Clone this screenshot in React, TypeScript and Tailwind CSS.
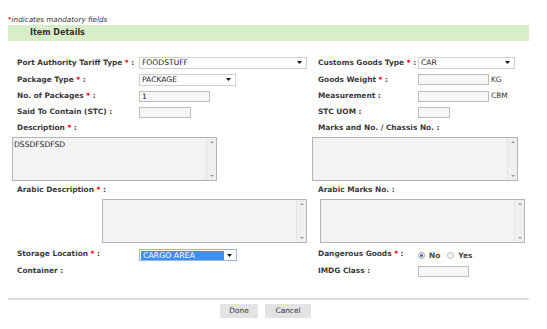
import React from 'react';

const Req = () => <span className="text-[#e60000]"> *</span>;

const Label: React.FC<{ text: string; req?: boolean; className?: string }> = ({ text, req, className }) => (
  <div className={`font-bold text-[7.4px] text-[#3a3a3a] whitespace-nowrap ${className ?? ''}`}>
    {text}
    {req && <Req />}
    {' :'}
  </div>
);

const Arrow = () => (
  <svg width="5" height="3" viewBox="0 0 5 3" className="shrink-0">
    <path d="M0 0 L5 0 L2.5 3 Z" fill="#111" />
  </svg>
);

const Select: React.FC<{ value: string; w: string; active?: boolean }> = ({ value, w, active }) => (
  <div className={`${w} h-[12px] flex items-center justify-between border ${active ? 'border-[#9ab8d8]' : 'border-[#d0d0d0]'} bg-white pl-[1px] pr-[4px]`}>
    {active ? (
      <span className="bg-[#3d8ff0] text-white text-[7.8px] leading-[9px] px-[2px] w-[83px] whitespace-nowrap">{value}</span>
    ) : (
      <span className="text-[7.6px] text-[#222] pl-[1px]">{value}</span>
    )}
    <Arrow />
  </div>
);

const Input: React.FC<{ w: string; value?: string }> = ({ w, value }) => (
  <div className={`${w} h-[11px] border border-[#bdbdbd] bg-[#f7f7f7] text-[7.6px] text-[#222] leading-[9px] pl-[2px]`}>
    {value}
  </div>
);

const Scroll = () => (
  <div className="w-[10px] h-full flex flex-col items-center justify-between py-[3px] bg-[#efefef] border-l border-[#e4e4e4]">
    <svg width="4" height="2" viewBox="0 0 4 2"><path d="M0 2 L4 2 L2 0 Z" fill="#999" /></svg>
    <svg width="4" height="2" viewBox="0 0 4 2"><path d="M0 0 L4 0 L2 2 Z" fill="#999" /></svg>
  </div>
);

const Area: React.FC<{ className: string; value?: string }> = ({ className, value }) => (
  <div className={`${className} h-[44px] flex border border-[#b5b5b5] bg-[#f3f3f3]`}>
    <div className="flex-1 text-[7.6px] text-[#222] pl-[1px] pt-[1px]">{value}</div>
    <Scroll />
  </div>
);

const Row: React.FC<{ h: string; left: React.ReactNode; right: React.ReactNode }> = ({ h, left, right }) => (
  <div className={`flex ${h}`}>
    <div className="w-[302px] flex items-center">{left}</div>
    <div className="flex-1 flex items-center">{right}</div>
  </div>
);

export default function App() {
  return (
    <div className="w-[547px] h-[329px] bg-white font-['DejaVu_Sans',sans-serif] pt-[15px] px-[8px] overflow-hidden">
      <div className="w-[521px]">
        <div className="h-[10px] text-[7.2px] italic text-[#333] leading-[10px]">
          <span className="text-[#e60000]">*</span>indicates mandatory fields
        </div>
        <div className="h-[16px] bg-[#d8eecb] flex items-center pl-[22px] text-[8px] font-bold text-[#333]">Item Details</div>

        <div className="mt-[13px]">
          <Row
            h="h-[17px]"
            left={<><Label text="Port Authority Tariff Type" req className="w-[131px] pl-[9px]" /><Select value="FOODSTUFF" w="w-[168px]" /></>}
            right={<><Label text="Customs Goods Type" req className="w-[108px] pl-[8px]" /><Select value="CAR" w="w-[97px]" /></>}
          />
          <Row
            h="h-[17px]"
            left={<><Label text="Package Type" req className="w-[131px] pl-[9px]" /><Select value="PACKAGE" w="w-[97px]" /></>}
            right={<><Label text="Goods Weight" req className="w-[108px] pl-[8px]" /><Input w="w-[71px]" /><span className="text-[7.4px] text-[#333] ml-[2px]">KG</span></>}
          />
          <Row
            h="h-[16px]"
            left={<><Label text="No. of Packages" req className="w-[131px] pl-[9px]" /><Input w="w-[71px]" value="1" /></>}
            right={<><Label text="Measurement" className="w-[108px] pl-[8px]" /><Input w="w-[71px]" /><span className="text-[7.4px] text-[#333] ml-[2px]">CBM</span></>}
          />
          <Row
            h="h-[16px]"
            left={<><Label text="Said To Contain (STC)" className="w-[131px] pl-[9px]" /><Input w="w-[52px]" /></>}
            right={<><Label text="STC UOM" className="w-[108px] pl-[8px]" /><Input w="w-[32px]" /></>}
          />
          <Row
            h="h-[16px]"
            left={<Label text="Description" req className="pl-[9px]" />}
            right={<Label text="Marks and No. / Chassis No." className="pl-[8px]" />}
          />
          <div className="flex mt-[1px]">
            <div className="w-[302px]"><Area className="ml-[4px] w-[205px]" value="DSSDFSDFSD" /></div>
            <div className="flex-1"><Area className="ml-[2px] w-[206px]" /></div>
          </div>
          <Row
            h="h-[18px]"
            left={<Label text="Arabic Description" req className="pl-[9px]" />}
            right={<Label text="Arabic Marks No." className="pl-[8px]" />}
          />
          <div className="flex">
            <div className="w-[302px]"><Area className="ml-[94px] w-[205px]" /></div>
            <div className="flex-1"><Area className="ml-[10px] w-[205px]" /></div>
          </div>
          <div className="flex h-[19px] mt-[1px]">
            <div className="w-[302px] flex items-center">
              <Label text="Storage Location" req className="w-[131px] pl-[9px]" />
              <div className="pt-[3px]"><Select value="CARGO AREA" w="w-[98px]" active /></div>
            </div>
            <div className="flex-1 flex items-center">
              <Label text="Dangerous Goods" req className="w-[108px] pl-[8px]" />
              <div className="flex items-center pt-[5px] text-[7.4px] font-bold text-[#444]">
                <span className="w-[7px] h-[7px] rounded-full border border-[#9a9a9a] bg-white flex items-center justify-center">
                  <span className="w-[3px] h-[3px] rounded-full bg-[#2266aa]" />
                </span>
                <span className="ml-[4px]">No</span>
                <span className="ml-[7px] w-[7px] h-[7px] rounded-full border border-[#bbb] bg-[#f3f3f3]" />
                <span className="ml-[4px]">Yes</span>
              </div>
            </div>
          </div>
          <Row
            h="h-[16px]"
            left={<Label text="Container" className="pl-[9px]" />}
            right={<><Label text="IMDG Class" className="w-[108px] pl-[8px]" /><Input w="w-[51px]" /></>}
          />
        </div>

        <div className="mt-[19px] h-[2px] bg-[#dedede]" />
        <div className="flex justify-center gap-[7px] mt-[4px] pr-[6px]">
          <div className="w-[38px] h-[14px] bg-[#e3e3e3] text-[7.4px] text-[#333] flex items-center justify-center">Done</div>
          <div className="w-[46px] h-[14px] bg-[#e3e3e3] text-[7.4px] text-[#333] flex items-center justify-center">Cancel</div>
        </div>
      </div>
    </div>
  );
}
